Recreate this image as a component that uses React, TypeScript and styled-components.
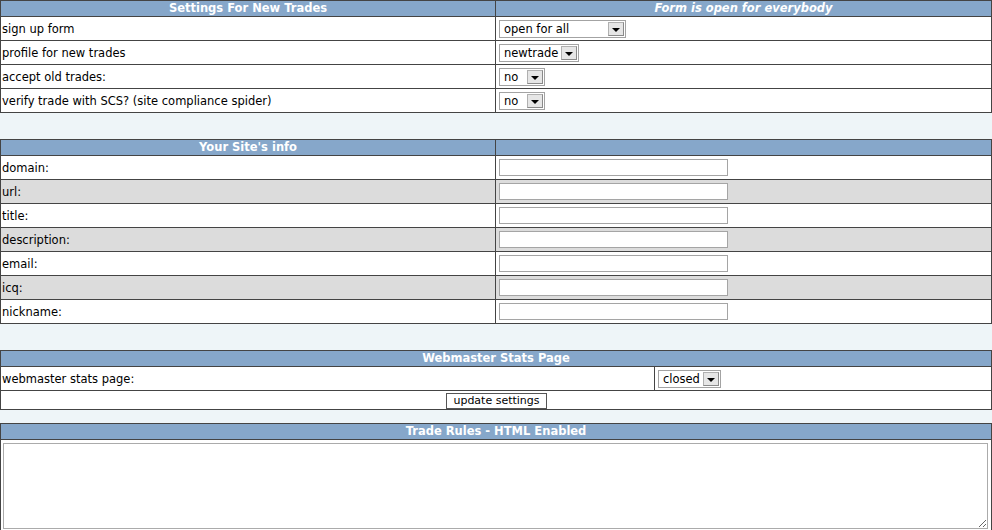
import React from "react";
import styled, { createGlobalStyle } from "styled-components";

const Global = createGlobalStyle`
  html, body { margin: 0; padding: 0; background: #eef5f8; }
  body { font-family: "DejaVu Sans", Verdana, sans-serif; font-size: 11.5px; color: #000; }
`;

const Page = styled.div`
  display: flex;
  flex-direction: column;
  width: 992px;
`;

const Table = styled.table<{ $gap?: number }>`
  width: 100%;
  border-collapse: collapse;
  border: 1px solid #444;
  margin-bottom: ${(p) => p.$gap ?? 0}px;
  table-layout: fixed;
`;

const Head = styled.th<{ $italic?: boolean }>`
  background: #86a7ca;
  color: #fff;
  font-weight: bold;
  font-style: ${(p) => (p.$italic ? "italic" : "normal")};
  font-size: 11.5px;
  height: 15px;
  padding: 0;
  line-height: 15px;
  text-align: center;
  border: 1px solid #444;
  white-space: nowrap;
  overflow: hidden;
`;

const Cell = styled.td<{ $alt?: boolean; $h?: number; $center?: boolean }>`
  background: ${(p) => (p.$alt ? "#dcdcdc" : "#fff")};
  border: 1px solid #444;
  height: ${(p) => p.$h ?? 23}px;
  padding: 0 0 0 1px;
  text-align: ${(p) => (p.$center ? "center" : "left")};
  vertical-align: middle;
  white-space: nowrap;
`;

const SelectBox = styled.div<{ $w: number }>`
  display: flex;
  align-items: center;
  box-sizing: border-box;
  width: ${(p) => p.$w}px;
  height: 18px;
  margin-left: 2px;
  border: 1px solid #a3a3a3;
  background: #fff;
  padding: 0 1px 0 4px;
`;

const SelectText = styled.span`
  flex: 1;
  line-height: 16px;
  overflow: hidden;
`;

const Arrow = styled.div`
  display: flex;
  align-items: center;
  justify-content: center;
  box-sizing: border-box;
  flex: none;
  width: 16px;
  height: 14px;
  background: #e6e6e6;
  border: 1px solid #8a8a8a;
  border-top-color: #b0b0b0;
  border-left-color: #b0b0b0;
  &::after {
    content: "";
    width: 0;
    height: 0;
    margin-top: 2px;
    border-left: 4px solid transparent;
    border-right: 4px solid transparent;
    border-top: 4px solid #000;
  }
`;

const Input = styled.input`
  display: block;
  box-sizing: border-box;
  width: 229px;
  height: 17px;
  margin: 0 0 0 2px;
  border: 1px solid #a5a5a5;
  background: #fff;
  padding: 0;
`;

const Button = styled.button`
  font-family: "DejaVu Sans", Verdana, sans-serif;
  font-size: 11px;
  height: 16px;
  width: 101px;
  padding: 0;
  background: #fff;
  border: 1px solid #555;
  color: #000;
  line-height: 14px;
  display: block;
  margin: 1px auto 0;
`;

const Area = styled.textarea`
  display: block;
  box-sizing: border-box;
  width: 985px;
  height: 86px;
  margin: 3px 0 0 2px;
  border: 1px solid #ababab;
  background: #fff;
  resize: both;
`;

const AreaCell = styled.td`
  background: #fff;
  border: 1px solid #444;
  padding: 0;
  height: 95px;
  vertical-align: top;
`;

function Select({ value, w }: { value: string; w: number }) {
  return (
    <SelectBox $w={w}>
      <SelectText>{value}</SelectText>
      <Arrow />
    </SelectBox>
  );
}

const trades: [string, string, number][] = [
  ["sign up form", "open for all", 127],
  ["profile for new trades", "newtrade", 80],
  ["accept old trades:", "no", 46],
  ["verify trade with SCS? (site compliance spider)", "no", 46],
];

const info = ["domain:", "url:", "title:", "description:", "email:", "icq:", "nickname:"];

export default function App() {
  return (
    <Page>
      <Global />
      <Table $gap={26}>
        <colgroup>
          <col style={{ width: "495px" }} />
          <col />
        </colgroup>
        <thead>
          <tr>
            <Head>Settings For New Trades</Head>
            <Head $italic>Form is open for everybody</Head>
          </tr>
        </thead>
        <tbody>
          {trades.map(([l, v, w]) => (
            <tr key={l}>
              <Cell>{l}</Cell>
              <Cell>
                <Select value={v} w={w} />
              </Cell>
            </tr>
          ))}
        </tbody>
      </Table>

      <Table $gap={26}>
        <colgroup>
          <col style={{ width: "495px" }} />
          <col />
        </colgroup>
        <thead>
          <tr>
            <Head>Your Site's info</Head>
            <Head />
          </tr>
        </thead>
        <tbody>
          {info.map((l, i) => (
            <tr key={l}>
              <Cell $alt={i % 2 === 1}>{l}</Cell>
              <Cell $alt={i % 2 === 1}>
                <Input type="text" />
              </Cell>
            </tr>
          ))}
        </tbody>
      </Table>

      <Table $gap={13}>
        <colgroup>
          <col style={{ width: "654px" }} />
          <col />
        </colgroup>
        <thead>
          <tr>
            <Head colSpan={2}>Webmaster Stats Page</Head>
          </tr>
        </thead>
        <tbody>
          <tr>
            <Cell>webmaster stats page:</Cell>
            <Cell>
              <Select value="closed" w={63} />
            </Cell>
          </tr>
          <tr>
            <Cell colSpan={2} $h={18} $center>
              <Button>update settings</Button>
            </Cell>
          </tr>
        </tbody>
      </Table>

      <Table>
        <thead>
          <tr>
            <Head>Trade Rules - HTML Enabled</Head>
          </tr>
        </thead>
        <tbody>
          <tr>
            <AreaCell>
              <Area />
            </AreaCell>
          </tr>
        </tbody>
      </Table>
    </Page>
  );
}
